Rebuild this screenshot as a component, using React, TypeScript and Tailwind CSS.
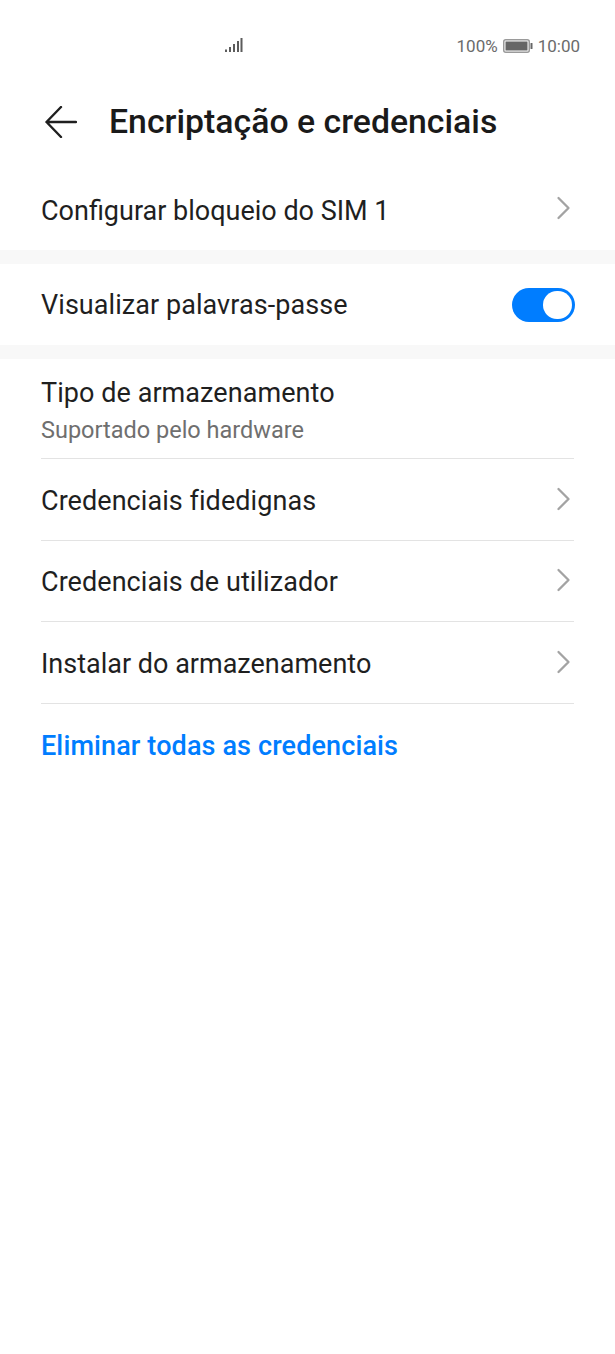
const font = { fontFamily: 'Roboto, "Noto Sans", sans-serif' };

function Chevron({ shift = 'mb-[2px]' }: { shift?: string }) {
  return (
    <svg width="16" height="24" viewBox="0 0 16 24" fill="none" className={`shrink-0 ${shift}`}>
      <path d="M2.5 2 L12.5 12 L2.5 22" stroke="#a3a3a3" strokeWidth="2.3" strokeLinecap="round" strokeLinejoin="round" />
    </svg>
  );
}

function Row({ label, h, border = true, textPad = 'pt-[2px]', shift, track = 'tracking-[0.06px]' }: { label: string; h: string; border?: boolean; textPad?: string; shift?: string; track?: string }) {
  return (
    <div className={`flex items-center justify-between pr-[2px] ${h} ${border ? 'border-b border-[#e3e3e3]' : ''}`}>
      <span className={`text-[27px] leading-[32px] text-[#1f1f1f] ${track} ${textPad}`}>{label}</span>
      <Chevron shift={shift} />
    </div>
  );
}

export default function App() {
  return (
    <div className="w-[615px] h-[1354px] bg-white overflow-hidden" style={font}>
      <div className="h-[78px] flex items-start pt-[36px] pl-[225px] pr-[35px]">
        <svg width="18" height="16" viewBox="0 0 18 16" className="mt-[1px] shrink-0" fill="#5c5c5c">
          <rect x="0" y="12.5" width="2" height="2.5" />
          <rect x="4" y="10" width="2" height="5" />
          <rect x="8" y="7" width="2" height="8" />
          <rect x="12" y="4" width="2" height="11" />
          <rect x="15.5" y="1" width="2" height="14" />
        </svg>
        <div className="ml-auto flex items-center h-[20px] text-[17px] leading-[20px] text-[#6b6b6b]">
          <span>100%</span>
          <svg width="30" height="14" viewBox="0 0 30 14" className="ml-[5px]">
            <rect x="0.75" y="0.75" width="25.5" height="12.5" rx="2" fill="none" stroke="#9a9a9a" strokeWidth="1.5" />
            <rect x="2.5" y="2.5" width="22" height="9" fill="#666666" />
            <rect x="27.5" y="4" width="2" height="6" rx="0.5" fill="#666666" />
          </svg>
          <span className="ml-[5px]">10:00</span>
        </div>
      </div>

      <div className="h-[88px] flex items-center pl-[45px]">
        <svg width="32" height="32" viewBox="0 0 32 32" fill="none" className="shrink-0">
          <path d="M31 16 H1.5 M16 1 L1.5 16 L16 31" stroke="#1f1f1f" strokeWidth="2.4" strokeLinecap="round" strokeLinejoin="round" />
        </svg>
        <h1 className="ml-[32px] mb-[1px] text-[33.8px] leading-[40px] font-medium text-[#1a1a1a]">Encriptação e credenciais</h1>
      </div>

      <div className="px-[41px]">
        <Row label="Configurar bloqueio do SIM 1" h="h-[84px]" border={false} textPad="pt-[5px]" shift="" track="tracking-normal" />
      </div>
      <div className="h-[14px] bg-[#f8f8f8]" />

      <div className="h-[81px] pl-[41px] pr-[40px] flex items-center justify-between">
        <span className="text-[27px] leading-[32px] tracking-[0.06px] pt-[1px] text-[#1f1f1f]">Visualizar palavras-passe</span>
        <div className="w-[63px] h-[34px] rounded-full bg-[#007dff] flex items-center justify-end pr-[3px]">
          <div className="w-[29px] h-[28px] rounded-full bg-white" />
        </div>
      </div>
      <div className="h-[14px] bg-[#f8f8f8]" />

      <div className="px-[41px]">
        <div className="h-[100px] border-b border-[#e3e3e3] pt-[18px]">
          <div className="text-[27px] leading-[32px] tracking-[0.06px] text-[#1f1f1f]">Tipo de armazenamento</div>
          <div className="mt-[7px] text-[23.5px] leading-[28px] text-[#6f6f6f]">Suportado pelo hardware</div>
        </div>
        <Row label="Credenciais fidedignas" h="h-[82px]" />
        <Row label="Credenciais de utilizador" h="h-[81px]" />
        <Row label="Instalar do armazenamento" h="h-[82px]" track="tracking-normal" />
        <div className="h-[83px] flex items-center">
          <span className="text-[27px] leading-[32px] tracking-[0.12px] font-medium text-[#007dff]">Eliminar todas as credenciais</span>
        </div>
      </div>
    </div>
  );
}
